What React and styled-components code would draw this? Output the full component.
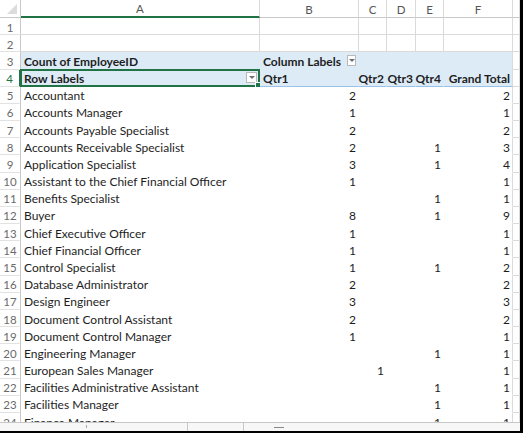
import React from "react"
import styled, { createGlobalStyle } from "styled-components"

const GlobalStyle = createGlobalStyle`
  html, body { margin: 0; padding: 0; background: #fff; }
`

const rows = [
  ["Accountant", 2, null, null, null, 2],
  ["Accounts Manager", 1, null, null, null, 1],
  ["Accounts Payable Specialist", 2, null, null, null, 2],
  ["Accounts Receivable Specialist", 2, null, null, 1, 3],
  ["Application Specialist", 3, null, null, 1, 4],
  ["Assistant to the Chief Financial Officer", 1, null, null, null, 1],
  ["Benefits Specialist", null, null, null, 1, 1],
  ["Buyer", 8, null, null, 1, 9],
  ["Chief Executive Officer", 1, null, null, null, 1],
  ["Chief Financial Officer", 1, null, null, null, 1],
  ["Control Specialist", 1, null, null, 1, 2],
  ["Database Administrator", 2, null, null, null, 2],
  ["Design Engineer", 3, null, null, null, 3],
  ["Document Control Assistant", 2, null, null, null, 2],
  ["Document Control Manager", 1, null, null, null, 1],
  ["Engineering Manager", null, null, null, 1, 1],
  ["European Sales Manager", null, 1, null, null, 1],
  ["Facilities Administrative Assistant", null, null, null, 1, 1],
  ["Facilities Manager", null, null, null, 1, 1],
  ["Finance Manager", null, null, null, 1, 1],
]

const letters = ["A", "B", "C", "D", "E", "F", ""]

export default function App() {
  return (
    <>
      <GlobalStyle />
      <Frame>
        <Sheet>
          <Corner><CornerMark /></Corner>
          {letters.map((l, i) => (
            <ColHead key={l + i} $active={l === "A"}>{l}</ColHead>
          ))}

          {[1, 2].map(n => (
            <React.Fragment key={n}>
              <RowHead>{n}</RowHead>
              {letters.map((l, i) => <Cell key={i} $grid />)}
            </React.Fragment>
          ))}

          <RowHead>3</RowHead>
          <Cell $head $bold>Count of EmployeeID</Cell>
          <Cell $head $bold>
            Column Labels
            <FilterButton style={{ marginLeft: 6 }}><Caret /></FilterButton>
          </Cell>
          <Cell $head />
          <Cell $head />
          <Cell $head />
          <Cell $head $edge />
          <Cell $grid />

          <RowHead $active>4</RowHead>
          <Cell $head $bold $line>
            Row Labels
            <FilterButton style={{ marginLeft: "auto" }}><Caret /></FilterButton>
            <Selection><Handle /></Selection>
          </Cell>
          <Cell $head $bold $line>Qtr1</Cell>
          <Cell $head $bold $line $right>Qtr2</Cell>
          <Cell $head $bold $line $right>Qtr3</Cell>
          <Cell $head $bold $line $right>Qtr4</Cell>
          <Cell $head $bold $line $right $edge>Grand Total</Cell>
          <Cell $grid />

          {rows.map((r, i) => (
            <React.Fragment key={r[0]}>
              <RowHead>{i + 5}</RowHead>
              <Cell>{r[0]}</Cell>
              {r.slice(1).map((v, j) => (
                <Cell key={j} $right $edge={j === 4}>{v}</Cell>
              ))}
              <Cell $grid />
            </React.Fragment>
          ))}
        </Sheet>
        <BottomBar>
          <TabStrip><Tick /></TabStrip>
          <Gap />
          <ScrollTrack><Thumb /></ScrollTrack>
        </BottomBar>
      </Frame>
    </>
  )
}

const Frame = styled.div`
  width: 523px;
  height: 433px;
  box-sizing: border-box;
  border-right: 3px solid #000;
  border-bottom: 2px solid #000;
  display: flex;
  flex-direction: column;
  overflow: hidden;
  font-family: Lato, "Open Sans", sans-serif;
  font-size: 12px;
  color: #1e1e1e;
`

const Sheet = styled.div`
  flex: 1;
  overflow: hidden;
  display: grid;
  grid-template-columns: 21px 239px 99px 28px 29px 28px 69px 1fr;
  grid-template-rows: 18px;
  grid-auto-rows: 17.18px;
`

const Corner = styled.div`
  position: relative;
  border-right: 1px solid #c8c8c8;
  border-bottom: 1px solid #c8c8c8;
`

const CornerMark = styled.div`
  position: absolute;
  right: 3px;
  bottom: 3px;
  width: 0;
  height: 0;
  border-left: 10px solid transparent;
  border-bottom: 10px solid #dcdcdc;
`

const ColHead = styled.div`
  display: flex;
  align-items: center;
  justify-content: center;
  padding-top: 1px;
  color: #555;
  font-size: 11.5px;
  box-sizing: border-box;
  border-right: 1px solid #dadada;
  border-bottom: ${p => (p.$active ? "2px solid #217346" : "1px solid #c8c8c8")};
`

const RowHead = styled.div`
  display: flex;
  align-items: center;
  justify-content: center;
  padding-top: 2px;
  color: ${p => (p.$active ? "#217346" : "#6a6a6a")};
  font-size: 11.5px;
  box-sizing: border-box;
  border-right: ${p => (p.$active ? "2px solid #217346" : "1px solid #c8c8c8")};
  border-bottom: 1px solid #e2e2e2;
`

const Cell = styled.div`
  position: relative;
  display: flex;
  align-items: center;
  justify-content: ${p => (p.$right ? "flex-end" : "flex-start")};
  padding: 2px 2px 0 3px;
  box-sizing: border-box;
  white-space: nowrap;
  font-weight: ${p => (p.$bold ? 700 : 400)};
  background: ${p => (p.$head ? "#ddebf7" : "#fff")};
  border-right: 1px solid ${p => (p.$grid || p.$edge ? "#dadada" : "transparent")};
  border-bottom: 1px solid
    ${p => (p.$line ? "#9bc2e6" : p.$grid ? "#dadada" : "transparent")};
`

const FilterButton = styled.span`
  display: inline-flex;
  align-items: center;
  justify-content: center;
  width: 11px;
  height: 11px;
  margin-top: -2px;
  box-sizing: border-box;
  border: 1px solid #b9b9b9;
  background: #fff;
`

const Caret = styled.span`
  width: 0;
  height: 0;
  border-left: 3px solid transparent;
  border-right: 3px solid transparent;
  border-top: 3px solid #707070;
`

const Selection = styled.div`
  position: absolute;
  left: -1px;
  top: -1px;
  right: -1px;
  bottom: -1px;
  border: 2px solid #217346;
  pointer-events: none;
`

const Handle = styled.div`
  position: absolute;
  right: -4px;
  bottom: -4px;
  width: 5px;
  height: 5px;
  background: #217346;
  border: 1px solid #fff;
`

const BottomBar = styled.div`
  height: 8px;
  flex: none;
  display: flex;
  border-top: 1px solid #c8c8c8;
  background: #f7f7f7;
`

const TabStrip = styled.div`
  position: relative;
  width: 187px;
  border-right: 1px solid #c8c8c8;
`

const Tick = styled.div`
  position: absolute;
  left: 86px;
  top: 2px;
  width: 1px;
  height: 3px;
  background: #aaa;
`

const Gap = styled.div`
  width: 55px;
`

const ScrollTrack = styled.div`
  flex: 1;
  display: flex;
  align-items: center;
  padding-left: 30px;
  border-left: 1px solid #c8c8c8;
`

const Thumb = styled.div`
  width: 10px;
  height: 1px;
  background: #888;
`
